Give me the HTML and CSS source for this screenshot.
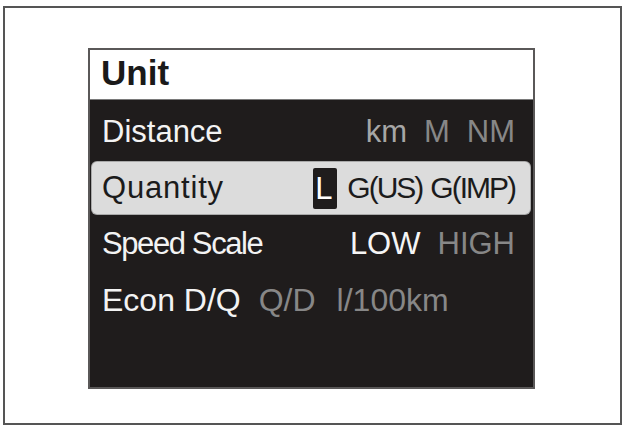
FILE: index.html
```html
<!DOCTYPE html>
<html lang="en">
<head>
<meta charset="utf-8">
<title>Unit</title>
<link rel="stylesheet" href="styles.css">
</head>
<body>
<div class="page">
  <div class="frame">
    <div class="panel">
      <div class="header">Unit</div>
      <div class="rows">
        <div class="row">
          <span class="label">Distance</span>
          <span class="opts">
            <span class="opt opt-sel">km</span>
            <span class="opt">M</span>
            <span class="opt">NM</span>
          </span>
        </div>
        <div class="row row-active">
          <span class="label label-wide">Quantity</span>
          <span class="opts opts-tight">
            <span class="cursor">L</span>
            <span class="opt-cond">G(US)</span>
            <span class="opt-cond">G(IMP)</span>
          </span>
        </div>
        <div class="row">
          <span class="label label-narrow">Speed Scale</span>
          <span class="opts">
            <span class="opt opt-on">LOW</span>
            <span class="opt">HIGH</span>
          </span>
        </div>
        <div class="row row-left">
          <span class="label">Econ D/Q</span>
          <span class="opts opts-econ">
            <span class="opt">Q/D</span>
            <span class="opt">l/100km</span>
          </span>
        </div>
      </div>
    </div>
  </div>
</div>
</body>
</html>
```

FILE: styles.css
```css
* { box-sizing: border-box; }

html, body {
  margin: 0;
  padding: 0;
  background: #ffffff;
}

body {
  font-family: "Liberation Sans", Arial, sans-serif;
  width: 624px;
  height: 426px;
  overflow: hidden;
}

.page {
  padding: 6px 2px 1px 3px;
  height: 426px;
}

.frame {
  width: 619px;
  height: 419px;
  border: 2px solid #555555;
  padding: 40px 0 0 83px;
  background: #ffffff;
}

.panel {
  width: 447px;
  height: 341px;
  border: 2px solid #5a5858;
  background: #1f1c1c;
  display: flex;
  flex-direction: column;
}

.header {
  height: 50px;
  line-height: 46px;
  background: #ffffff;
  color: #1a1a1a;
  font-weight: bold;
  font-size: 35px;
  padding-left: 11px;
  border-bottom: 1px solid #7a7a7a;
}

.rows {
  padding: 6px 3px 0 2px;
  display: flex;
  flex-direction: column;
  gap: 4px;
}

.row {
  height: 52px;
  line-height: 52px;
  font-size: 31px;
  color: #f3f3f3;
  padding: 0 15px 0 10px;
  display: flex;
  align-items: center;
  justify-content: space-between;
  white-space: nowrap;
}

.row-left {
  justify-content: flex-start;
  gap: 18px;
  font-size: 32px;
}

.row-active {
  background: #dcdcdc;
  color: #1b1b1b;
  border-radius: 5px;
  box-shadow: 0 0 0 1px #a9a9a9;
}

.label-wide {
  letter-spacing: 0.8px;
}

.label-narrow {
  letter-spacing: -1.4px;
}

.opts {
  display: flex;
  align-items: center;
  gap: 17px;
}

.opts-tight {
  gap: 8px;
}

.opts-econ {
  gap: 21px;
}

.opt {
  color: #878787;
}

.opt-sel {
  color: #a6a6a6;
}

.opt-on {
  color: #f5f5f5;
}

.opt-cond {
  letter-spacing: -2px;
  font-size: 30px;
  color: #1b1b1b;
}

.cursor {
  display: block;
  width: 24px;
  height: 41px;
  line-height: 41px;
  background: #1f1c1c;
  color: #ffffff;
  border-radius: 2px;
  padding-left: 2px;
  font-size: 31px;
  margin-right: 2px;
}
```
